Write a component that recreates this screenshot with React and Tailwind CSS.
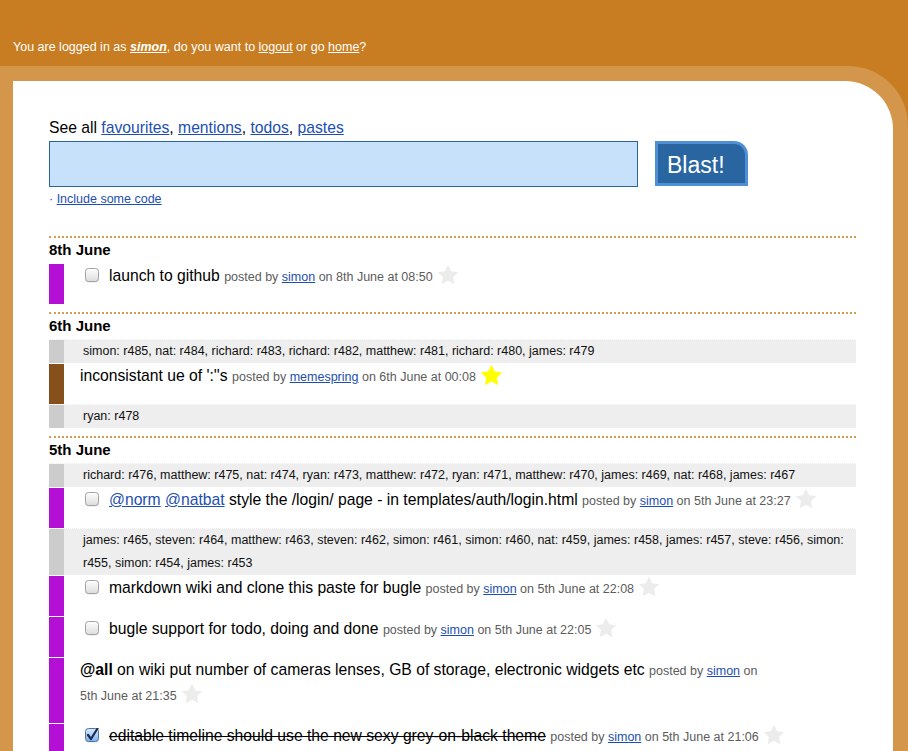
import React from 'react'

const PURPLE = 'bg-[#b40fd4]'
const BROWN = 'bg-[#85501b]'

function Star({ on = false, big = false }) {
  return (
    <svg
      viewBox="0 0 24 24"
      className={`inline-block ml-[4px] ${big ? 'w-[23px] h-[23px] align-[-6px]' : 'w-[22px] h-[22px] align-[-5px]'}`}
    >
      <polygon
        points="12 0.8 15.4 7.9 23.2 8.9 17.5 14.3 19 22.1 12 18.3 5 22.1 6.5 14.3 0.8 8.9 8.6 7.9"
        fill={on ? '#ffff00' : '#ececec'}
      />
    </svg>
  )
}

function Check({ checked = false }) {
  return (
    <svg viewBox="0 0 14 15" className="inline-block w-[14px] h-[15px] ml-[5px] mr-[10px] align-[-2px]">
      <defs>
        <linearGradient id={checked ? 'cbOn' : 'cbOff'} x1="0" y1="0" x2="0" y2="1">
          <stop offset="0" stopColor={checked ? '#dcebfc' : '#ffffff'} />
          <stop offset="1" stopColor={checked ? '#7fb2ee' : '#dcdcdc'} />
        </linearGradient>
      </defs>
      <rect x="0.5" y="1.5" width="13" height="13" rx="3" fill="#000" opacity="0.12" />
      <rect
        x="0.5"
        y="0.5"
        width="13"
        height="13"
        rx="3"
        fill={`url(#${checked ? 'cbOn' : 'cbOff'})`}
        stroke={checked ? '#4f73a8' : '#a3a3a3'}
      />
      {checked && (
        <path d="M3 7 L6 11 L12.5 0.5" fill="none" stroke="#1b2c55" strokeWidth="2.2" strokeLinecap="round" strokeLinejoin="round" />
      )}
    </svg>
  )
}

function Link({ children }) {
  return <a href="#" className="text-[#1c4fb0] underline">{children}</a>
}

function Posted({ by, when, fav }) {
  return (
    <span className="text-[12.5px] text-[#5c5c5c]">
      posted by <Link>{by}</Link> on{' '}
      <span className="whitespace-nowrap">
        {when}
        <Star on={fav} big={fav} />
      </span>
    </span>
  )
}

const days = [
  {
    title: '8th June',
    rows: [
      { kind: 'todo', bar: PURPLE, text: 'launch to github', by: 'simon', when: '8th June at 08:50' }
    ]
  },
  {
    title: '6th June',
    rows: [
      { kind: 'commits', text: 'simon: r485, nat: r484, richard: r483, richard: r482, matthew: r481, richard: r480, james: r479' },
      { kind: 'blast', bar: BROWN, text: "inconsistant ue of ':''s", by: 'memespring', when: '6th June at 00:08', fav: true },
      { kind: 'commits', text: 'ryan: r478' }
    ]
  },
  {
    title: '5th June',
    rows: [
      { kind: 'commits', text: 'richard: r476, matthew: r475, nat: r474, ryan: r473, matthew: r472, ryan: r471, matthew: r470, james: r469, nat: r468, james: r467' },
      {
        kind: 'todo',
        bar: PURPLE,
        text: (
          <>
            <Link>@norm</Link> <Link>@natbat</Link> style the /login/ page - in templates/auth/login.html
          </>
        ),
        by: 'simon',
        when: '5th June at 23:27'
      },
      { kind: 'commits', text: 'james: r465, steven: r464, matthew: r463, steven: r462, simon: r461, simon: r460, nat: r459, james: r458, james: r457, steve: r456, simon: r455, simon: r454, james: r453' },
      { kind: 'todo', bar: PURPLE, text: 'markdown wiki and clone this paste for bugle', by: 'simon', when: '5th June at 22:08' },
      { kind: 'todo', bar: PURPLE, text: 'bugle support for todo, doing and done', by: 'simon', when: '5th June at 22:05' },
      {
        kind: 'blast',
        bar: PURPLE,
        text: (
          <>
            <b>@all</b> on wiki put number of cameras lenses, GB of storage, electronic widgets etc
          </>
        ),
        by: 'simon',
        when: '5th June at 21:35'
      },
      { kind: 'done', bar: PURPLE, text: 'editable timeline should use the new sexy grey-on-black theme', by: 'simon', when: '5th June at 21:06' }
    ]
  }
]

function Row({ row }) {
  if (row.kind === 'commits') {
    return (
      <li className="flex bg-[#eeeeee] border-t border-dotted border-white">
        <div className="w-[15px] shrink-0 bg-[#cccccc]" />
        <div className="pl-[19px] pr-2 text-[12.5px] leading-[23px] text-[#111]">{row.text}</div>
      </li>
    )
  }

  return (
    <li className="flex border-t border-dotted border-white">
      <div className={`w-[15px] shrink-0 ${row.bar}`} />
      <div className="pl-4 pb-[15px] text-[15.7px] leading-6 text-black">
        {row.kind === 'todo' && <Check />}
        {row.kind === 'done' && <Check checked />}
        <span className={row.kind === 'done' ? 'line-through' : ''}>{row.text}</span>{' '}
        <Posted by={row.by} when={row.when} fav={row.fav} />
      </div>
    </li>
  )
}

export default function App() {
  return (
    <div className="min-h-[751px] bg-[#c87d22] font-['Liberation_Sans',Arial,Helvetica,sans-serif]">
      {/* top bar */}
      <div className="h-[66px] flex items-end pb-[11px] pl-[13px] text-white text-[12.5px] leading-4">
        <p>
          You are logged in as{' '}
          <a href="#" className="underline font-bold italic">simon</a>, do you want to{' '}
          <a href="#" className="underline">logout</a> or go <a href="#" className="underline">home</a>?
        </p>
      </div>

      <div className="bg-[#d4964b] pt-[15px] pl-[13px] pr-[15px] rounded-tr-[60px]">
        <div className="bg-white rounded-tr-[48px] pt-[37px] pl-9 pr-[37px] pb-10">
          {/* blast form */}
          <p className="text-[15.7px] leading-5 text-black">
            See all <Link>favourites</Link>, <Link>mentions</Link>, <Link>todos</Link>, <Link>pastes</Link>
          </p>
          <div className="mt-[3px] flex items-start gap-[17px]">
            <textarea className="block w-[589px] h-[46px] bg-[#c8e1fa] border border-[#2a65a0] resize-none outline-none" />
            <button className="w-[93px] h-[45px] bg-[#2965a1] border-[3px] border-[#4e8fd6] rounded-tr-[14px] text-white text-[23px] leading-none text-left pl-[9px] pt-[3px]">
              Blast!
            </button>
          </div>
          <p className="mt-1 text-[12.5px] leading-4 text-[#1c4fb0]">
            · <Link>Include some code</Link>
          </p>

          {/* timeline */}
          <div className="mt-[29px]">
            {days.map((day) => (
              <section key={day.title} className="border-t-2 border-dotted border-[#d99b4f] pb-2">
                <h2 className="font-bold text-[15px] leading-[18px] pt-[3px] pb-[4px] text-black">{day.title}</h2>
                <ul>
                  {day.rows.map((row, i) => (
                    <Row key={i} row={row} />
                  ))}
                </ul>
              </section>
            ))}
          </div>
        </div>
      </div>
    </div>
  )
}
